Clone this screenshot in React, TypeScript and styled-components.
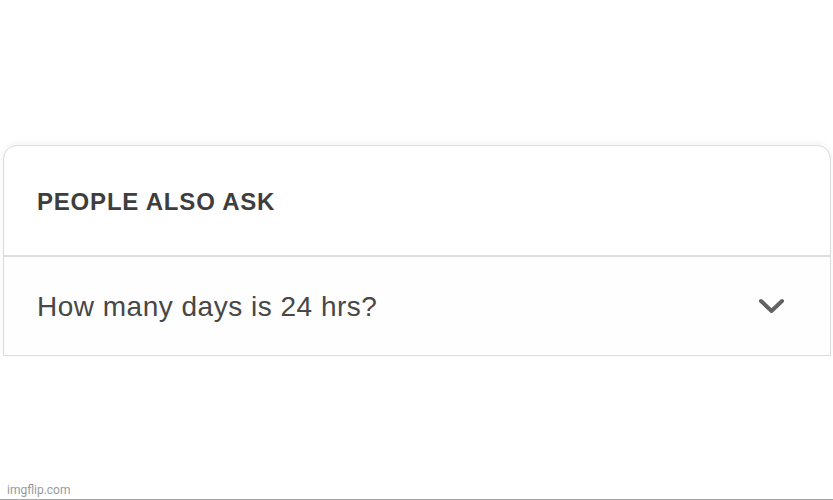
import styled, { createGlobalStyle } from "styled-components";

const GlobalStyle = createGlobalStyle`
  html, body {
    margin: 0;
    padding: 0;
    background: #fff;
  }
  body {
    font-family: "Liberation Sans", Arial, sans-serif;
  }
`;

const Page = styled.div`
  width: 833px;
  height: 500px;
  box-sizing: border-box;
  display: flex;
  flex-direction: column;
  padding: 145px 2px 0 3px;
  border-bottom: 1px solid #a8a8a8;
  overflow: hidden;
`;

const Card = styled.section`
  display: flex;
  flex-direction: column;
  border: 1px solid #dcdcdc;
  border-radius: 14px 14px 0 0;
  background: #fff;
  box-shadow: 0 -2px 6px rgba(0, 0, 0, 0.05);
`;

const Header = styled.div`
  height: 109px;
  display: flex;
  align-items: center;
  padding-left: 33px;
  border-bottom: 2px solid #dedede;
`;

const Title = styled.h2`
  margin: 0;
  padding-top: 2px;
  font-size: 24px;
  font-weight: 700;
  letter-spacing: 0.8px;
  color: #3e3e3e;
`;

const Row = styled.div`
  height: 98px;
  display: flex;
  align-items: center;
  justify-content: space-between;
  padding: 0 44px 0 33px;
  background: #fefefe;
`;

const Question = styled.span`
  font-size: 28px;
  letter-spacing: 0.5px;
  color: #474747;
  padding-top: 2px;
`;

const Chevron = styled.svg`
  width: 29px;
  height: 20px;
  color: #636363;
`;

const Footer = styled.div`
  margin-top: auto;
  padding: 0 0 2px 4px;
  font-family: Roboto, "Liberation Sans", sans-serif;
  font-size: 12px;
  color: #9a9a9a;
`;

export default function App() {
  return (
    <>
      <GlobalStyle />
      <Page>
        <Card>
          <Header>
            <Title>PEOPLE ALSO ASK</Title>
          </Header>
          <Row>
            <Question>How many days is 24 hrs?</Question>
            <Chevron viewBox="0 0 29 20" fill="none">
              <polyline
                points="4,5 14.5,15 25,5"
                stroke="currentColor"
                strokeWidth="4"
                strokeLinecap="round"
                strokeLinejoin="round"
              />
            </Chevron>
          </Row>
        </Card>
        <Footer>imgflip.com</Footer>
      </Page>
    </>
  );
}
